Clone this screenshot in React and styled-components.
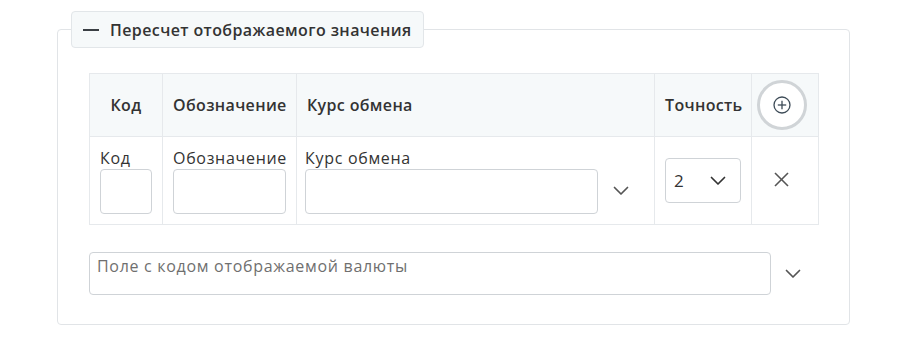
import React from "react";
import styled, { createGlobalStyle } from "styled-components";

const GlobalStyle = createGlobalStyle`
  body {
    margin: 0;
    background: #ffffff;
    font-family: "Open Sans", "Noto Sans", sans-serif;
    color: #333;
  }
`;

const Page = styled.div`
  padding: 11px 0 0 57px;
  width: 793px;
`;

const Fieldset = styled.fieldset`
  margin: 0;
  padding: 0;
  min-width: 0;
  height: 314px;
  box-sizing: border-box;
  border: 1px solid #e1e4e7;
  border-radius: 4px;
`;

const Legend = styled.legend`
  margin-left: 13px;
  padding: 0 11px;
  height: 37px;
  box-sizing: border-box;
  display: flex;
  align-items: center;
  gap: 11px;
  background: #f6f9fa;
  border: 1px solid #e2e6e9;
  border-radius: 4px;
  font-size: 16px;
  letter-spacing: 0.4px;
  font-weight: 600;
  color: #333;
`;

const Dash = styled.span`
  display: block;
  width: 16px;
  height: 2px;
  background: #3a3f44;
`;

const Inner = styled.div`
  padding: 25px 30px 30px 31px;
`;

const Table = styled.table`
  width: 729px;
  border-collapse: collapse;
  table-layout: fixed;
  font-size: 16px;
  letter-spacing: 0.7px;
`;

const Th = styled.th`
  height: 62px;
  padding: ${(p) => p.$pad || "0 10px"};
  background: #f6f9fa;
  border: 1px solid #e6e9ec;
  font-weight: 600;
  letter-spacing: 0.35px;
  color: #333;
  text-align: ${(p) => p.$align || "left"};
  white-space: nowrap;
`;

const Td = styled.td`
  height: 88px;
  box-sizing: border-box;
  padding: ${(p) => p.$pad || "10px"};
  border: 1px solid #e6e9ec;
  vertical-align: middle;
  text-align: ${(p) => p.$align || "left"};
`;

const Label = styled.div`
  line-height: 21px;
  color: #333;
  white-space: nowrap;
`;

const TextInput = styled.input`
  display: block;
  box-sizing: border-box;
  width: ${(p) => p.$w || "100%"};
  height: 45px;
  border: 1px solid #cfd3d7;
  border-radius: 4px;
  background: #fff;
  font: inherit;
  padding: 0 8px;
  outline: none;
`;

const SelectRow = styled.div`
  display: flex;
  align-items: center;
`;

const ChevronBox = styled.div`
  width: ${(p) => p.$w || "46px"};
  display: flex;
  justify-content: center;
  align-items: center;
  color: #555;
`;

const Precision = styled.div`
  box-sizing: border-box;
  width: 76px;
  height: 45px;
  border: 1px solid #cfd3d7;
  border-radius: 4px;
  display: flex;
  align-items: center;
  justify-content: space-between;
  padding: 0 14px 0 8px;
  font-size: 17px;
  color: #333;
`;

const AddButton = styled.button`
  width: 50px;
  height: 50px;
  border-radius: 50%;
  border: 3px solid #d0d4d7;
  background: #fff;
  display: inline-flex;
  align-items: center;
  justify-content: center;
  vertical-align: middle;
  padding: 0;
  color: #3d4b57;
  cursor: pointer;
`;

const RemoveButton = styled.button`
  border: none;
  background: none;
  padding: 0;
  display: inline-flex;
  color: #555;
  cursor: pointer;
`;

const Bottom = styled.div`
  margin-top: 27px;
  display: flex;
  align-items: center;
`;

const Area = styled.textarea`
  box-sizing: border-box;
  width: 682px;
  height: 43px;
  resize: none;
  border: 1px solid #cfd3d7;
  border-radius: 4px;
  padding: 3px 7px;
  font: inherit;
  font-size: 16px;
  letter-spacing: 0.7px;
  line-height: 21px;
  overflow: hidden;
  outline: none;
  &::placeholder {
    color: #6f6f6f;
  }
`;

const Chevron = () => (
  <svg width="16" height="10" viewBox="0 0 16 10" fill="none">
    <polyline points="1.5,1.5 8,8 14.5,1.5" stroke="currentColor" strokeWidth="1.7" strokeLinecap="round" strokeLinejoin="round" />
  </svg>
);

const PlusCircle = () => (
  <svg width="18" height="18" viewBox="0 0 18 18" fill="none">
    <circle cx="9" cy="9" r="8" stroke="currentColor" strokeWidth="1.3" />
    <line x1="9" y1="4.8" x2="9" y2="13.2" stroke="currentColor" strokeWidth="1.3" />
    <line x1="4.8" y1="9" x2="13.2" y2="9" stroke="currentColor" strokeWidth="1.3" />
  </svg>
);

const Cross = () => (
  <svg width="15" height="15" viewBox="0 0 15 15" fill="none">
    <line x1="1" y1="1" x2="14" y2="14" stroke="currentColor" strokeWidth="1.6" />
    <line x1="14" y1="1" x2="1" y2="14" stroke="currentColor" strokeWidth="1.6" />
  </svg>
);

export default function App() {
  return (
    <>
      <GlobalStyle />
      <Page>
        <Fieldset>
          <Legend>
            <Dash />
            Пересчет отображаемого значения
          </Legend>
          <Inner>
            <Table>
              <colgroup>
                <col style={{ width: 73 }} />
                <col style={{ width: 134 }} />
                <col style={{ width: 358 }} />
                <col style={{ width: 97 }} />
                <col style={{ width: 67 }} />
              </colgroup>
              <thead>
                <tr>
                  <Th $align="center">Код</Th>
                  <Th>Обозначение</Th>
                  <Th>Курс обмена</Th>
                  <Th>Точность</Th>
                  <Th $align="center" $pad="0 7px 0 0">
                    <AddButton aria-label="Добавить">
                      <PlusCircle />
                    </AddButton>
                  </Th>
                </tr>
              </thead>
              <tbody>
                <tr>
                  <Td>
                    <Label>Код</Label>
                    <TextInput />
                  </Td>
                  <Td>
                    <Label>Обозначение</Label>
                    <TextInput />
                  </Td>
                  <Td $pad="10px 10px 10px 8px">
                    <Label>Курс обмена</Label>
                    <SelectRow>
                      <TextInput $w="293px" />
                      <ChevronBox>
                        <Chevron />
                      </ChevronBox>
                    </SelectRow>
                  </Td>
                  <Td>
                    <Precision>
                      <span>2</span>
                      <Chevron />
                    </Precision>
                  </Td>
                  <Td $align="center" $pad="10px 7px 10px 0">
                    <RemoveButton aria-label="Удалить">
                      <Cross />
                    </RemoveButton>
                  </Td>
                </tr>
              </tbody>
            </Table>
            <Bottom>
              <Area placeholder="Поле с кодом отображаемой валюты" />
              <ChevronBox $w="43px">
                <Chevron />
              </ChevronBox>
            </Bottom>
          </Inner>
        </Fieldset>
      </Page>
    </>
  );
}
